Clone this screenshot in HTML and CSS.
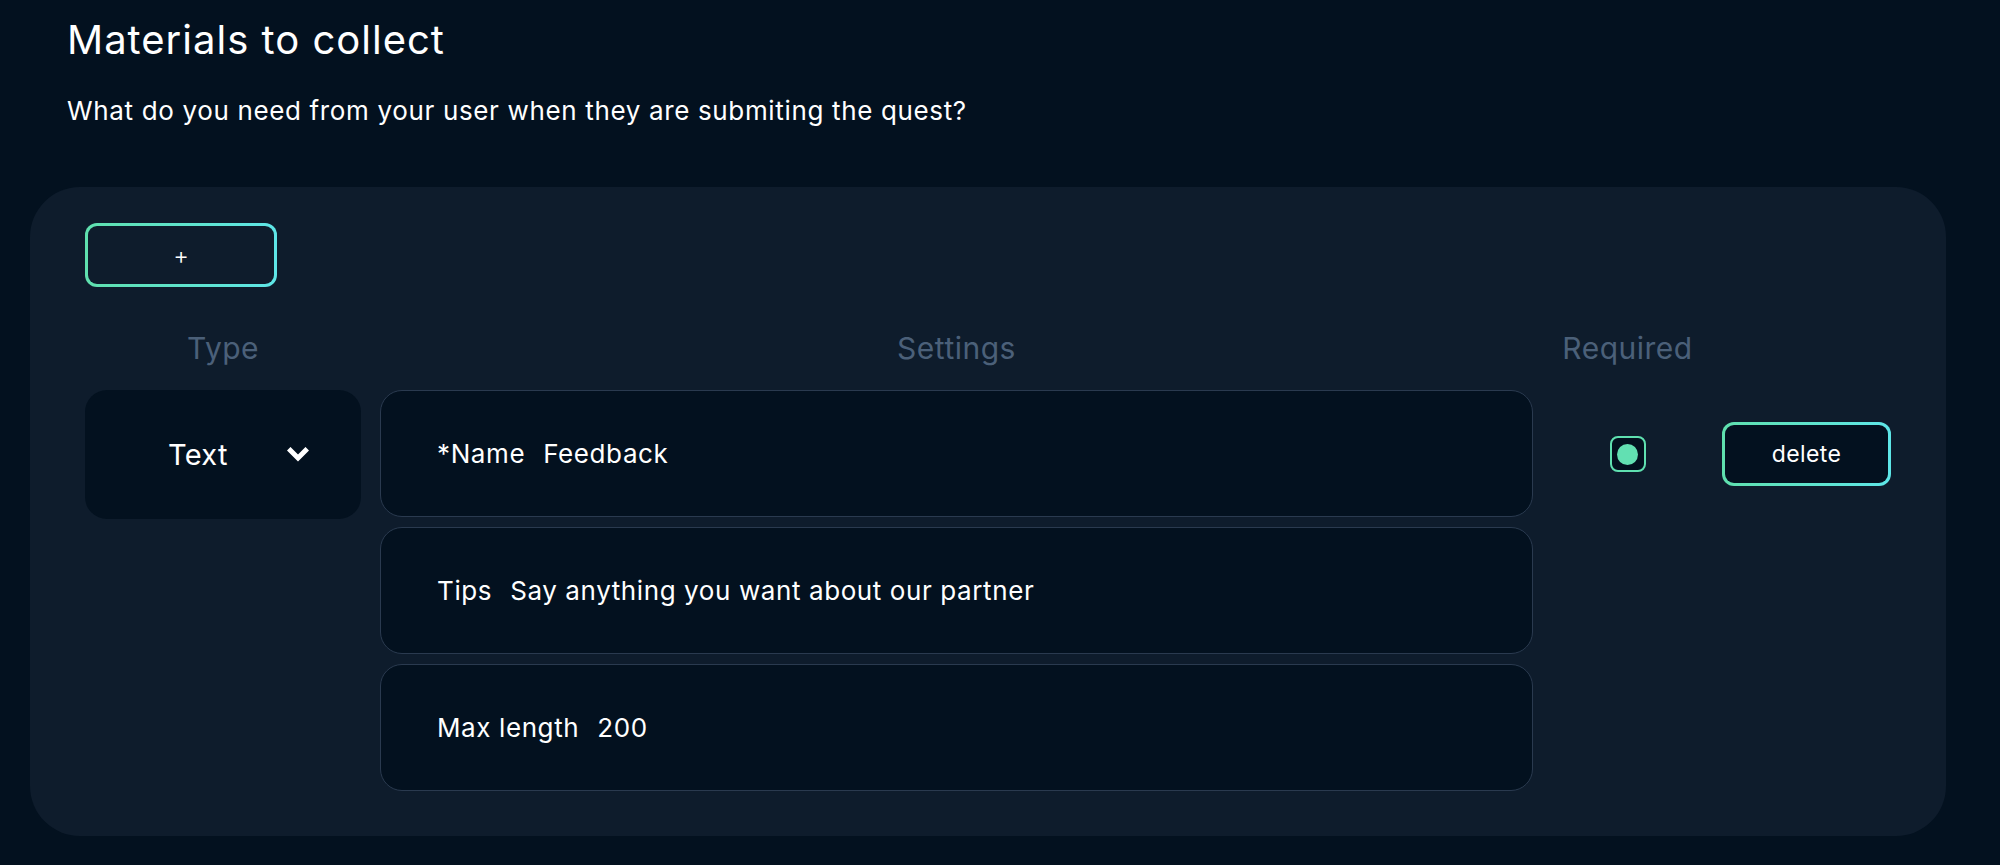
FILE: index.html
```html
<!DOCTYPE html>
<html lang="en">
<head>
<meta charset="utf-8">
<title>Materials to collect</title>
<link rel="stylesheet" href="styles.css">
</head>
<body>
<div class="page">
  <header class="intro">
    <h1 class="title">Materials to collect</h1>
    <p class="subtitle">What do you need from your user when they are submiting the quest?</p>
  </header>
  <section class="panel">
    <button class="btn-outline btn-add" type="button">+</button>
    <div class="grid">
      <div class="col-head">Type</div>
      <div class="col-head">Settings</div>
      <div class="col-head">Required</div>
      <div class="col-head"></div>

      <div class="type-select">
        <span class="type-label">Text</span>
        <svg class="chevron" width="22" height="15" viewBox="0 0 22 15" aria-hidden="true">
          <polyline points="3.5,3.5 11,11 18.5,3.5" fill="none" stroke="#ffffff" stroke-width="5" stroke-linecap="square" stroke-linejoin="miter"/>
        </svg>
      </div>
      <div class="fields">
        <div class="field"><span class="field-label">*Name</span><span class="field-value">Feedback</span></div>
        <div class="field"><span class="field-label">Tips</span><span class="field-value">Say anything you want about our partner</span></div>
        <div class="field"><span class="field-label">Max length</span><span class="field-value">200</span></div>
      </div>
      <div class="cell-center">
        <span class="checkbox"><span class="checkbox-dot"></span></span>
      </div>
      <div class="cell-center">
        <button class="btn-outline btn-delete" type="button">delete</button>
      </div>
    </div>
  </section>
</div>
</body>
</html>
```
FILE: styles.css
```css
* { box-sizing: border-box; }
html, body { margin: 0; padding: 0; }
body {
  background: #03111f;
  color: #ffffff;
  font-family: Inter, "Open Sans", sans-serif;
  width: 2000px;
  height: 865px;
  overflow: hidden;
}
.page {
  padding: 17px 54px 0 30px;
}
.intro {
  padding-left: 37px;
}
.title {
  margin: 0;
  font-size: 40px;
  font-weight: 400;
  line-height: 46px;
  letter-spacing: 1px;
}
.subtitle {
  margin: 32px 0 0;
  font-size: 26px;
  font-weight: 400;
  line-height: 32px;
  letter-spacing: 0.65px;
}
.panel {
  margin-top: 60px;
  background: #0e1c2c;
  border-radius: 50px;
  padding: 36px 55px 45px 55px;
}
.btn-outline {
  display: flex;
  align-items: center;
  justify-content: center;
  border: 3px solid transparent;
  border-radius: 12px;
  background:
    linear-gradient(#0e1c2c, #0e1c2c) padding-box,
    linear-gradient(90deg, #5fe0ae, #5ee6e8) border-box;
  color: #ffffff;
  font-family: inherit;
  padding: 0;
  cursor: pointer;
}
.btn-add {
  width: 192px;
  height: 64px;
  font-size: 24px;
  font-weight: 300;
}
.grid {
  margin-top: 41px;
  display: grid;
  grid-template-columns: 276px 1153px 1fr 169px;
  column-gap: 19px;
  align-items: start;
}
.col-head {
  text-align: center;
  color: #4b6079;
  font-size: 30px;
  line-height: 40px;
  letter-spacing: 0.5px;
  margin-bottom: 22px;
}
.type-select {
  height: 129px;
  background: #03111f;
  border-radius: 22px;
  display: flex;
  align-items: center;
  padding: 0 52px 0 83px;
}
.type-label {
  font-size: 29px;
  letter-spacing: 0.3px;
}
.chevron {
  margin-left: auto;
  display: block;
}
.fields {
  display: flex;
  flex-direction: column;
  gap: 10px;
}
.field {
  height: 127px;
  border: 1.5px solid #2a3a4f;
  border-radius: 22px;
  background: #03111f;
  display: flex;
  align-items: center;
  padding-left: 56px;
  font-size: 26px;
  letter-spacing: 0.6px;
  gap: 18px;
}
.cell-center {
  height: 128px;
  display: flex;
  align-items: center;
  justify-content: center;
}
.checkbox {
  width: 36px;
  height: 36px;
  border: 2px solid #5fe0b0;
  border-radius: 8px;
  background: #03111f;
  display: flex;
  align-items: center;
  justify-content: center;
}
.checkbox-dot {
  width: 21px;
  height: 21px;
  border-radius: 50%;
  background: #62e0b2;
}
.btn-delete {
  width: 169px;
  height: 64px;
  font-size: 23px;
  letter-spacing: 0.4px;
  background:
    linear-gradient(#03111f, #03111f) padding-box,
    linear-gradient(90deg, #5fe0ae, #5ee6e8) border-box;
}
```
